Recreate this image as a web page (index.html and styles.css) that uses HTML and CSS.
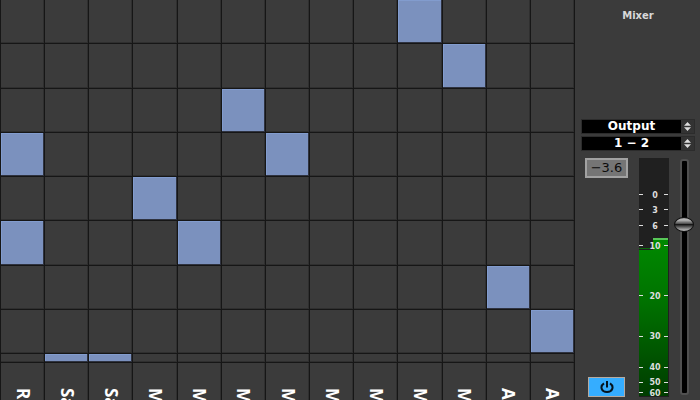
FILE: index.html
```html
<!DOCTYPE html>
<html lang="en">
<head>
<meta charset="utf-8">
<title>Mixer</title>
<link rel="stylesheet" href="styles.css">
</head>
<body>
<main class="app">
  <section class="matrix" id="matrix" aria-label="Routing matrix"></section>
  <aside class="mixer">
    <h1 class="title">Mixer</h1>
    <div class="outputs">
      <div class="picker">
        <select class="select" aria-label="Output type"><option>Output</option></select>
        <svg class="arrows" viewBox="0 0 13 13" aria-hidden="true"><path d="M3 5.7 6.5 2 10 5.7zM3 7.3 6.5 11 10 7.3z"/></svg>
      </div>
      <div class="picker">
        <select class="select" aria-label="Output channels"><option>1 − 2</option></select>
        <svg class="arrows" viewBox="0 0 13 13" aria-hidden="true"><path d="M3 5.7 6.5 2 10 5.7zM3 7.3 6.5 11 10 7.3z"/></svg>
      </div>
    </div>
    <div class="strip">
      <div class="controls">
        <output class="gain">−3.6</output>
        <button class="power" type="button" aria-label="Power">
          <svg class="power-icon" viewBox="0 0 14 14" aria-hidden="true"><path d="M4 3.4C-.6 6.4 1.6 12 7 12S14.600 6.400 10 3.400M7 1V7.500"/></svg>
        </button>
      </div>
      <svg class="meter" viewBox="0 0 30 239" role="img" aria-label="Level meter">
        <defs>
          <linearGradient id="level" x1="0" y1="80" x2="0" y2="239" gradientUnits="userSpaceOnUse">
            <stop offset="0" stop-color="#008a00"/>
            <stop offset="0.4" stop-color="#007200"/>
            <stop offset="1" stop-color="#003c00"/>
          </linearGradient>
        </defs>
        <rect class="meter-back" width="30" height="239"/>
        <rect x="0" y="90" width="14" height="1" fill="#0a6a0a"/>
        <rect x="0" y="92" width="14" height="146" fill="url(#level)"/>
        <rect x="14" y="80" width="15" height="158" fill="url(#level)"/>
        <rect x="14" y="80" width="15" height="2" fill="#58c858"/>
        <path class="ticks" d="M0 36.5h4M25 36.5h4M0 51.5h4M25 51.5h4M0 67.5h4M25 67.5h4M0 87.5h4M25 87.5h4M0 137.5h4M25 137.5h4M0 178.5h4M25 178.5h4M0 209.5h4M25 209.5h4M0 224.5h4M25 224.5h4M0 234.5h4M25 234.5h4"/>
        <g class="scale">
          <text x="16" y="40">0</text>
          <text x="16" y="55">3</text>
          <text x="16" y="71">6</text>
          <text x="16" y="91">10</text>
          <text x="16" y="141">20</text>
          <text x="16" y="181">30</text>
          <text x="16" y="212">40</text>
          <text x="16" y="227">50</text>
          <text x="16" y="238">60</text>
        </g>
      </svg>
      <input class="fader" type="range" min="0" max="100" value="74" aria-label="Volume">
    </div>
  </aside>
</main>
<script src="matrix.js"></script>
</body>
</html>
```
FILE: styles.css
```css
* {
  box-sizing: border-box;
}

body {
  margin: 0;
  background: #3b3b3b;
  color: #fff;
  font-family: "DejaVu Sans", sans-serif;
}

.app {
  display: grid;
  grid-template-columns: 1fr 125px;
  min-height: 100vh;
}

.matrix {
  display: grid;
  grid-template-columns: repeat(13, 1fr);
  grid-template-rows: repeat(8, 1fr) 8px 37px;
  gap: 1px;
  padding: 0 1px;
  background: #161616;
}

.cell {
  background: #3b3b3b;
  box-shadow: inset -1px -1px #2f2f2f;
}

.cell.on {
  background: #7b91be;
  box-shadow: inset -1px -1px #2f3340, inset 1px 1px #829cce;
}

.track {
  display: flex;
  align-items: center;
  padding-top: 25px;
  background: #3b3b3b;
  box-shadow: inset -1px 0 #2f2f2f;
  font: bold 17px/20px "Open Sans", sans-serif;
  height: 37px;
  overflow: hidden;
  writing-mode: vertical-rl;
  white-space: nowrap;
}

.mixer {
  display: flex;
  flex-direction: column;
  padding: 9px 5px 3px 6px;
}

.title {
  margin: 0;
  color: #d8d8d8;
  font-size: 10px;
  line-height: 14px;
  text-align: center;
}

.outputs {
  display: flex;
  flex-direction: column;
  gap: 2px;
  margin-top: auto;
}

.picker {
  display: flex;
  height: 15px;
  border: 1px solid #2c2c2c;
  background: #000;
}

.select {
  flex: 1;
  min-width: 0;
  padding: 0;
  border: 0;
  background: #000;
  color: #fff;
  font: bold 12px/13px "DejaVu Sans", sans-serif;
  text-align-last: center;
  appearance: none;
}

.arrows {
  width: 13px;
  height: 13px;
  background: #333;
  fill: #ddd;
}

.strip {
  display: flex;
  margin-top: 7px;
}

.controls {
  display: flex;
  flex: 1;
  flex-direction: column;
  justify-content: space-between;
  align-items: flex-start;
  padding-left: 4px;
}

.gain {
  width: 43px;
  border: 2px solid #a2a2a2;
  background: #757575;
  color: #0c0c0c;
  font-size: 13px;
  line-height: 16px;
  text-align: center;
}

.power {
  display: grid;
  place-items: center;
  width: 37px;
  height: 20px;
  margin-left: 3px;
  padding: 0;
  border: 1px solid #b5aaa0;
  background: #35adff;
}

.power-icon {
  width: 14px;
  height: 14px;
  fill: none;
  stroke: #04141f;
  stroke-width: 2;
}

.meter {
  width: 30px;
  height: 239px;
}

.meter-back {
  fill: #202020;
}

.ticks {
  stroke: #ddd;
}

.scale {
  fill: #ddd;
  font-size: 8px;
  font-weight: bold;
  text-anchor: middle;
}

.fader {
  width: 20px;
  height: 236px;
  margin: 1px 1px 0 5px;
  background: none;
  writing-mode: vertical-lr;
  direction: rtl;
  appearance: none;
}

.fader::-webkit-slider-runnable-track {
  width: 9px;
  border: 2px solid #505050;
  border-radius: 3px;
  background: #000;
}

.fader::-webkit-slider-thumb {
  width: 20px;
  height: 15px;
  margin-left: -8px;
  border: 1px solid #111;
  border-radius: 50%;
  background: linear-gradient(#999, #bbb 15%, #555 42%, #181818 50%, #444 62%, #aaa 90%);
  appearance: none;
}
```
FILE: matrix.js
```js
const columns = ["R", "Sa", "Sa", "M", "M", "M", "M", "M", "M", "M", "M", "A", "A"];
const rows = [[9], [10], [5], [0, 6], [3], [0, 4], [11], [12], [1, 2]];
const matrix = document.getElementById("matrix");

for (const active of rows) {
  columns.forEach((name, index) => {
    const cell = document.createElement("div");
    cell.className = active.includes(index) ? "cell on" : "cell";
    matrix.append(cell);
  });
}

for (const name of columns) {
  const label = document.createElement("div");
  label.className = "track";
  label.textContent = name;
  matrix.append(label);
}
```
